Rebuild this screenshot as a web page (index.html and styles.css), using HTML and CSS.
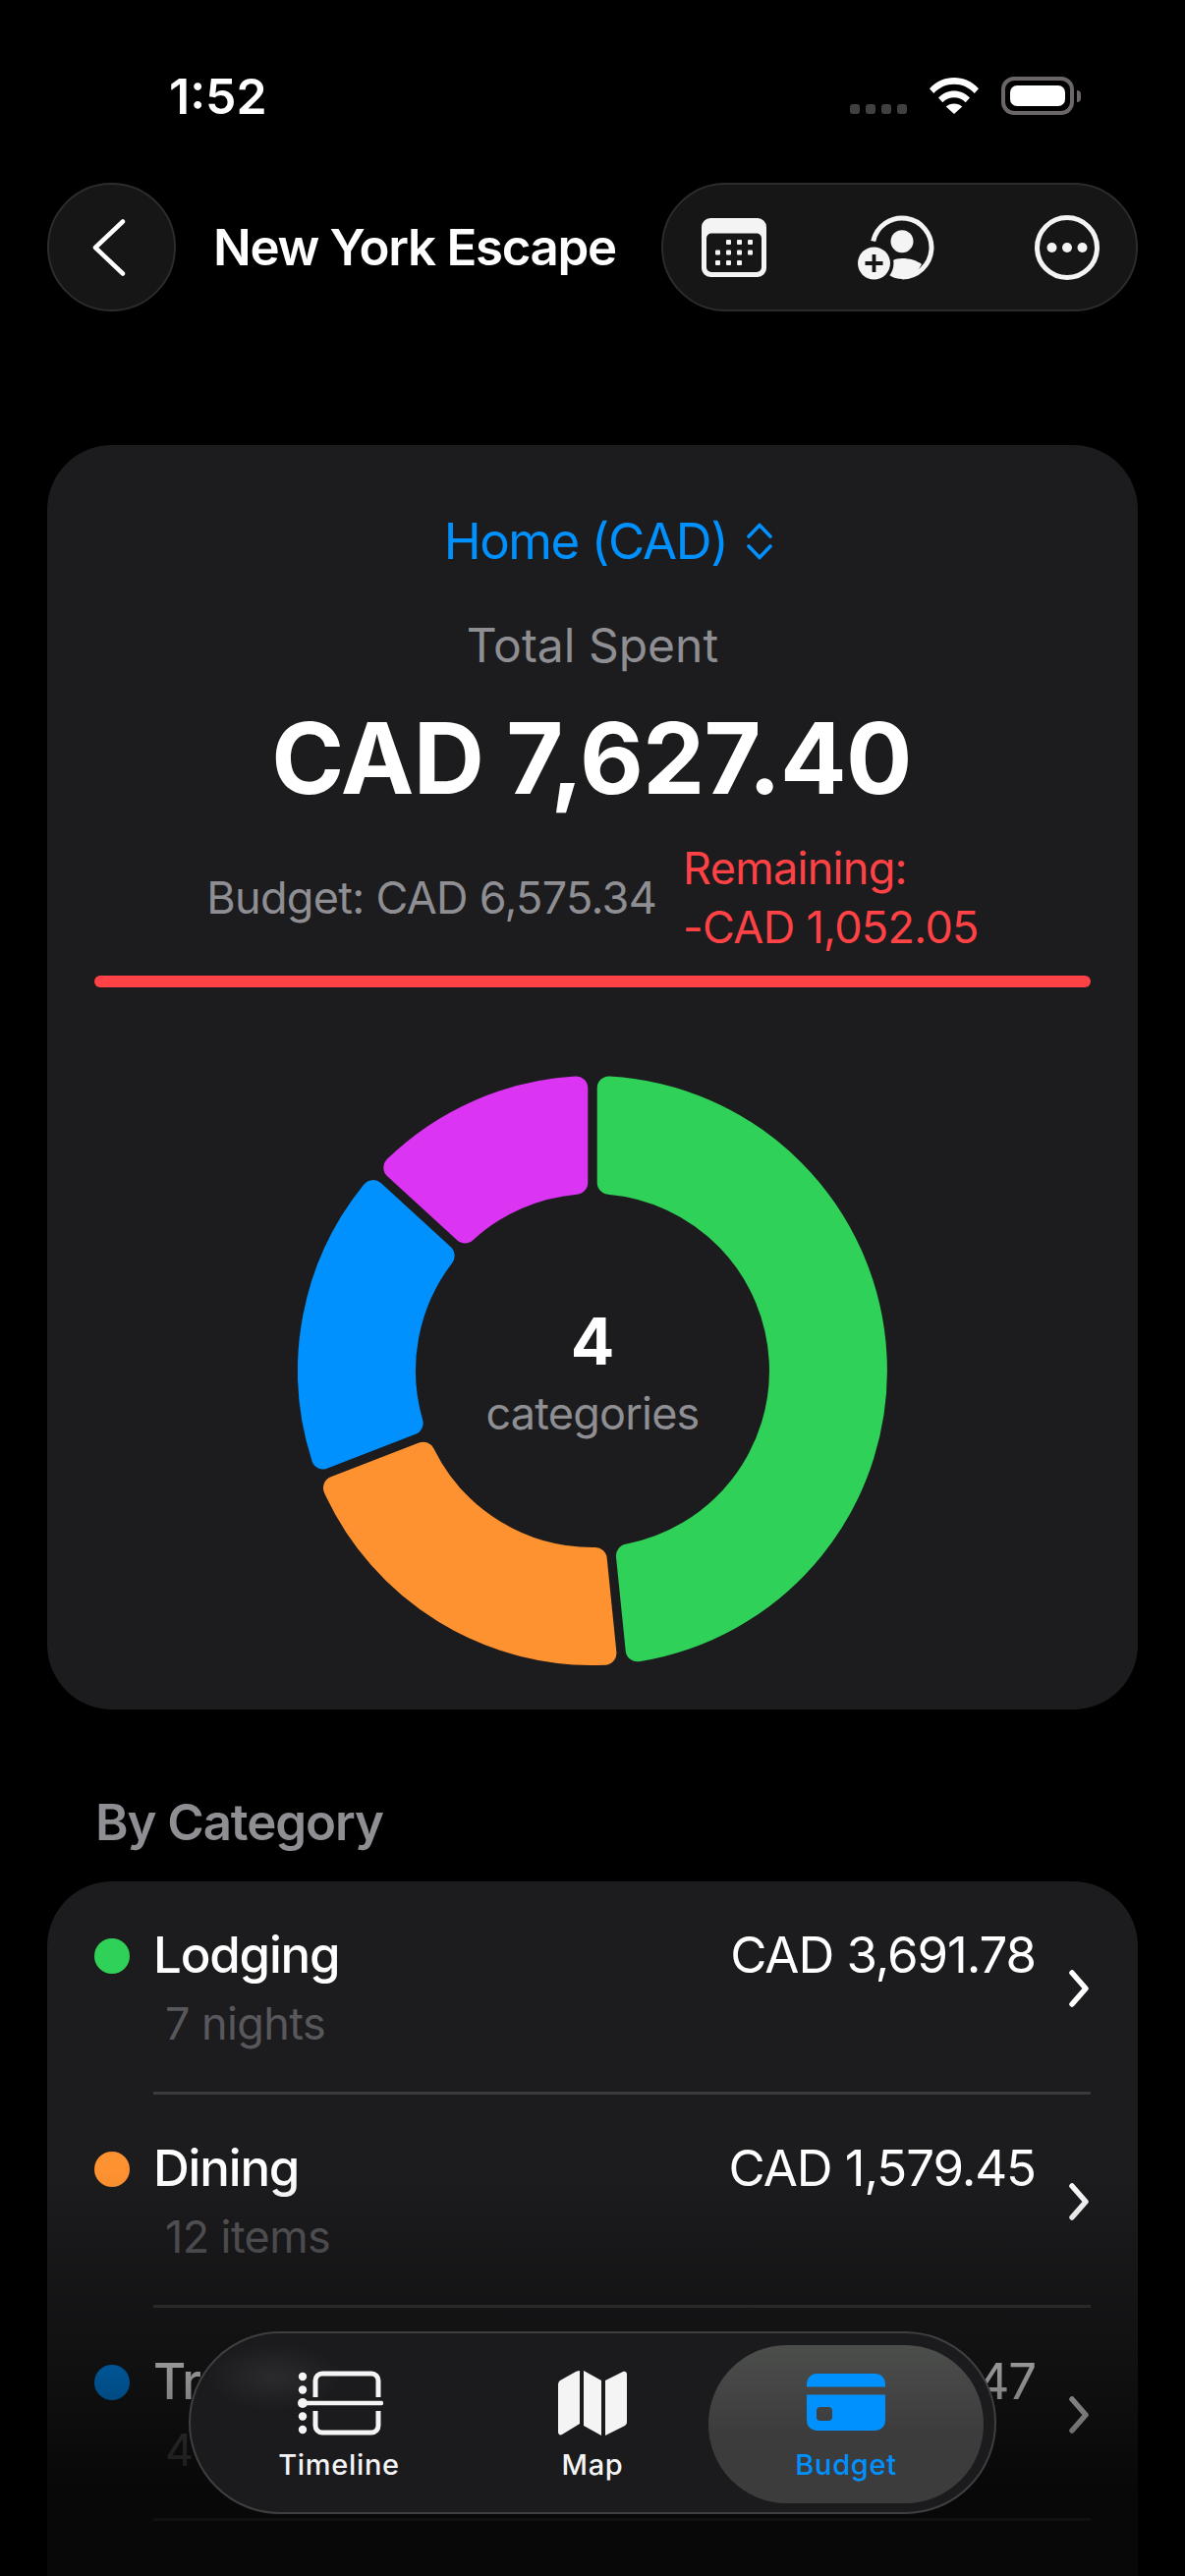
FILE: index.html
```html
<!DOCTYPE html>
<html lang="en">
<head>
  <meta charset="UTF-8">
  <meta name="viewport" content="width=device-width, initial-scale=1.0">
  <title>New York Escape - Budget</title>
  <link rel="stylesheet" href="styles.css">
</head>
<body>
  <div class="status-bar">
    <span class="status-time">1:52</span>
    <div class="status-icons">
      <div class="signal"><i></i><i></i><i></i><i></i></div>
      <svg class="wifi" width="50" height="37" viewBox="0 0 50 37">
        <path d="M25 0C15.500 0 7 3.700 0 11.200l4.300 4.800C10 10 17 6.800 25 6.800S40 10 45.700 16l4.300-4.800C43 3.700 34.500 0 25 0z" fill="#fff"/>
        <path d="M25 13.500c-6 0-11.500 2.500-16 7l4.300 4.800c3.200-3.200 7.200-5 11.700-5s8.500 1.800 11.700 5l4.300-4.800c-4.500-4.500-10-7-16-7z" fill="#fff"/>
        <path d="M25 26.500c-3.200 0-6 1.100-8.300 3.100L25 37l8.300-7.400c-2.300-2-5.100-3.100-8.300-3.100z" fill="#fff"/>
      </svg>
      <div class="battery"><div class="battery-fill"></div></div>
      <div class="battery-cap"></div>
    </div>
  </div>

  <div class="nav">
    <button class="back-btn">
      <svg width="34" height="58" viewBox="0 0 34 58"><path d="M31 2.500L3 29l28 26.500" fill="none" stroke="#fff" stroke-width="4.500" stroke-linecap="round" stroke-linejoin="round"/></svg>
    </button>
    <div class="nav-title">New York Escape</div>
    <div class="nav-actions">
      <svg width="66" height="60" viewBox="0 0 66 60">
        <path fill-rule="evenodd" fill="#f4f4f4" d="M9 0h48a9 9 0 0 1 9 9v42a9 9 0 0 1-9 9H9a9 9 0 0 1-9-9V9a9 9 0 0 1 9-9zM10 15.500a5 5 0 0 0-5 5V50a5 5 0 0 0 5 5h46a5 5 0 0 0 5-5V20.500a5 5 0 0 0-5-5z"/>
        <g fill="#f4f4f4">
          <rect x="25" y="22" width="5" height="5" rx="1"/><rect x="36" y="22" width="5" height="5" rx="1"/><rect x="47" y="22" width="5" height="5" rx="1"/>
          <rect x="14" y="32.500" width="5" height="5" rx="1"/><rect x="25" y="32.500" width="5" height="5" rx="1"/><rect x="36" y="32.500" width="5" height="5" rx="1"/><rect x="47" y="32.500" width="5" height="5" rx="1"/>
          <rect x="14" y="43" width="5" height="5" rx="1"/><rect x="25" y="43" width="5" height="5" rx="1"/><rect x="36" y="43" width="5" height="5" rx="1"/>
        </g>
      </svg>
      <svg class="person-add" width="80" height="68" viewBox="0 0 80 68">
        <path d="M15.700 27.500A30 30 0 1 1 45 64" fill="none" stroke="#f4f4f4" stroke-width="5"/>
        <circle cx="45" cy="27.700" r="11.500" fill="#f4f4f4"/>
        <path d="M26 56C31 48 38 45 45 45c8 0 15 2 20 6-5 9-12 15-20 15-8 0-15-4-19-10z" fill="#f4f4f4"/>
        <circle cx="16.500" cy="50" r="20" fill="#161616"/>
        <circle cx="16.500" cy="50" r="16.500" fill="#f4f4f4"/>
        <path d="M16.500 41v18M7.500 50h18" stroke="#161616" stroke-width="3.800"/>
      </svg>
      <svg width="66" height="66" viewBox="0 0 66 66">
        <circle cx="33" cy="33" r="30.500" fill="none" stroke="#f4f4f4" stroke-width="5"/>
        <circle cx="17.500" cy="33" r="5" fill="#f4f4f4"/><circle cx="33" cy="33" r="5" fill="#f4f4f4"/><circle cx="48.500" cy="33" r="5" fill="#f4f4f4"/>
      </svg>
    </div>
  </div>

  <div class="summary-card">
    <div class="currency-picker">
      <span>Home (CAD)</span>
      <svg width="26" height="38" viewBox="0 0 26 38"><path d="M2 14L13 2.500 24 14M2 24l11 11.500L24 24" fill="none" stroke="#0091ff" stroke-width="3.600" stroke-linecap="round" stroke-linejoin="round"/></svg>
    </div>
    <div class="total-label">Total Spent</div>
    <div class="total-value">CAD 7,627.40</div>
    <div class="budget-line">
      <div class="budget-amount">Budget: CAD 6,575.34</div>
      <div class="budget-remaining">Remaining:<br>-CAD 1,052.05</div>
    </div>
    <div class="progress"></div>
    <div class="donut">
      <svg width="600" height="600" viewBox="0 0 600 600" class="donut-chart">
        <path class="slice lodging" d="M316.700 12.500A288 288 0 0 1 345.670 584.350L335.940 488.600A192 192 0 0 0 316.700 108.730Z"/>
        <path class="slice dining" d="M312.450 587.730A288 288 0 0 1 37.980 419.540L127.710 384.740A192 192 0 0 0 302.720 491.980Z"/>
        <path class="slice transit" d="M25.900 388.400A288 288 0 0 1 76.740 118.070L147.700 183.090A192 192 0 0 0 115.630 353.600Z"/>
        <path class="slice activities" d="M99.300 93.450A288 288 0 0 1 283.300 12.500L283.300 108.730A192 192 0 0 0 170.260 158.470Z"/>
      </svg>
      <div class="donut-center">
        <div class="donut-count">4</div>
        <div class="donut-label">categories</div>
      </div>
    </div>
  </div>

  <div class="section-title">By Category</div>

  <div class="category-list">
    <div class="category-row">
      <span class="dot dot-green"></span>
      <div class="category-body">
        <span class="category-name">Lodging</span>
        <span class="category-amount">CAD 3,691.78</span>
        <svg class="chevron" width="20" height="38" viewBox="0 0 20 38"><path d="M3 3l14 16L3 35" fill="none" stroke="#fff" stroke-width="5.500" stroke-linecap="round" stroke-linejoin="round"/></svg>
        <span class="category-sub">7 nights</span>
      </div>
    </div>
    <div class="category-row">
      <span class="dot dot-orange"></span>
      <div class="category-body">
        <span class="category-name">Dining</span>
        <span class="category-amount">CAD 1,579.45</span>
        <svg class="chevron" width="20" height="38" viewBox="0 0 20 38"><path d="M3 3l14 16L3 35" fill="none" stroke="#fff" stroke-width="5.500" stroke-linecap="round" stroke-linejoin="round"/></svg>
        <span class="category-sub">12 items</span>
      </div>
    </div>
    <div class="category-row">
      <span class="dot dot-blue"></span>
      <div class="category-body">
        <span class="category-name">Transit</span>
        <span class="category-amount">CAD 1,318.47</span>
        <svg class="chevron" width="20" height="38" viewBox="0 0 20 38"><path d="M3 3l14 16L3 35" fill="none" stroke="#fff" stroke-width="5.500" stroke-linecap="round" stroke-linejoin="round"/></svg>
        <span class="category-sub">4 items</span>
      </div>
    </div>
  </div>

  <div class="bottom-fade"></div>

  <div class="tab-bar">
    <div class="tab">
      <svg width="90" height="66" viewBox="0 0 90 66">
        <g fill="#f4f4f4">
          <circle cx="8" cy="6" r="4.200"/><circle cx="8" cy="19.500" r="4.200"/><circle cx="8" cy="33" r="5"/><circle cx="8" cy="46.500" r="4.200"/><circle cx="8" cy="60" r="4.200"/>
        </g>
        <path d="M8 33h80" stroke="#f4f4f4" stroke-width="4.400" stroke-linecap="round"/>
        <path d="M21 27V10a7 7 0 0 1 7-7h50a7 7 0 0 1 7 7v17M21 41v15a7 7 0 0 0 7 7h50a7 7 0 0 0 7-7V41" fill="none" stroke="#f4f4f4" stroke-width="5"/>
      </svg>
      <span class="tab-label">Timeline</span>
    </div>
    <div class="tab">
      <svg width="70" height="66" viewBox="0 0 70 66">
        <path d="M22 0v54L4 65c-2 1-4 0-4-3V14c0-2 1-3 2-4L18 1c2-1 4-1 4-1z" fill="#f4f4f4"/>
        <path d="M26 0l18 10v56L26 56z" fill="#f4f4f4"/>
        <path d="M48 10L66 1c2-1 4 0 4 3v48c0 2-1 3-2 4L48 66z" fill="#f4f4f4"/>
      </svg>
      <span class="tab-label">Map</span>
    </div>
    <div class="tab tab-active">
      <svg width="80" height="58" viewBox="0 0 80 58">
        <path d="M0 13.500V10A10 10 0 0 1 10 0h60a10 10 0 0 1 10 10v3.500z" fill="#0091ff"/>
        <path fill-rule="evenodd" d="M0 21.500h80V48a10 10 0 0 1-10 10H10A10 10 0 0 1 0 48zM14 34a4 4 0 0 0-4 4v6a4 4 0 0 0 4 4h8a4 4 0 0 0 4-4v-6a4 4 0 0 0-4-4z" fill="#0091ff"/>
      </svg>
      <span class="tab-label">Budget</span>
    </div>
  </div>
</body>
</html>
```

FILE: styles.css
```css
* {
  box-sizing: border-box;
}

html, body {
  margin: 0;
  padding: 0;
}

body {
  position: relative;
  width: 1206px;
  height: 2622px;
  overflow: hidden;
  background: #000;
  color: #fff;
  font-family: Inter, "Noto Sans", sans-serif;
}

/* status bar */
.status-bar {
  display: flex;
  justify-content: space-between;
  height: 186px;
  padding: 68px 106px 0 172px;
}

.status-time {
  font-size: 50px;
  font-weight: 600;
  line-height: 60px;
}

.status-icons {
  display: flex;
  align-items: flex-start;
  padding-top: 10px;
}

.signal {
  display: flex;
  gap: 6px;
  margin-top: 28px;
  margin-right: 23px;
}

.signal i {
  width: 10px;
  height: 10px;
  border-radius: 3px;
  background: #404040;
}

.wifi {
  margin-top: 1px;
  margin-right: 23px;
}

.battery {
  width: 74px;
  height: 39px;
  padding: 5px;
  border: 4px solid #6b6669;
  border-radius: 13px;
}

.battery-fill {
  height: 100%;
  background: #fff;
  border-radius: 7px;
}

.battery-cap {
  width: 4px;
  height: 12px;
  margin: 14px 0 0 3px;
  background: #6b6669;
  border-radius: 0 4px 4px 0;
}

/* nav */
.nav {
  display: flex;
  align-items: center;
  height: 131px;
  padding: 0 48px;
}

.back-btn {
  display: flex;
  align-items: center;
  justify-content: center;
  width: 131px;
  height: 131px;
  padding: 0 6px 0 0;
  background: #161616;
  border: 2px solid #2c2c2e;
  border-radius: 50%;
}

.nav-title {
  flex: 1;
  margin-left: 38px;
  font-size: 51px;
  font-weight: 600;
  line-height: 60px;
  letter-spacing: -1.3px;
}

.nav-actions {
  display: flex;
  align-items: center;
  justify-content: space-between;
  width: 485px;
  height: 131px;
  padding: 0 37px 0 39px;
  background: #161616;
  border: 2px solid #2c2c2e;
  border-radius: 66px;
}

.person-add {
  margin-right: 7px;
}

/* summary */
.summary-card {
  height: 1287px;
  margin: 136px 48px 0;
  padding: 68px 48px 0;
  background: #1c1c1e;
  border-radius: 66px;
  text-align: center;
}

.currency-picker {
  display: flex;
  align-items: center;
  justify-content: center;
  gap: 20px;
  padding-left: 32px;
  color: #0091ff;
  font-size: 51px;
  line-height: 60px;
  letter-spacing: -1.4px;
}

.total-label {
  margin-top: 46px;
  color: #8e8e93;
  font-size: 48px;
  line-height: 60px;
}

.total-value {
  margin: 25px 2px 0 0;
  font-size: 100px;
  font-weight: 700;
  line-height: 120px;
  letter-spacing: -0.7px;
}

.budget-line {
  display: flex;
  align-items: center;
  justify-content: center;
  gap: 27px;
  margin-top: 22px;
  font-size: 45px;
  line-height: 60px;
  letter-spacing: -0.7px;
  text-align: left;
}

.budget-amount {
  color: #8e8e93;
}

.budget-remaining {
  color: #ff4245;
}

.progress {
  height: 12px;
  margin-top: 19px;
  background: #ff4245;
  border-radius: 6px;
}

.donut {
  position: relative;
  width: 600px;
  height: 600px;
  margin: 90px auto 0;
}

.donut-chart {
  display: block;
}

.slice {
  stroke-width: 24;
  stroke-linejoin: round;
}

.lodging { fill: #30d158; stroke: #30d158; }
.dining { fill: #ff9230; stroke: #ff9230; }
.transit { fill: #0091ff; stroke: #0091ff; }
.activities { fill: #db34f2; stroke: #db34f2; }

.donut-center {
  position: absolute;
  top: 230px;
  left: 0;
  right: 0;
  text-align: center;
}

.donut-count {
  font-size: 66px;
  font-weight: 700;
  line-height: 80px;
}

.donut-label {
  margin-top: 6px;
  color: #8e8e93;
  font-size: 45px;
  line-height: 56px;
  letter-spacing: -0.8px;
}

/* category list */
.section-title {
  margin: 85px 48px 30px 97px;
  color: #8e8e93;
  font-size: 51px;
  font-weight: 600;
  line-height: 60px;
  letter-spacing: -1.1px;
}

.category-list {
  height: 707px;
  margin: 0 48px;
  padding-left: 48px;
  background: #1c1c1e;
  border-radius: 66px 66px 0 0;
}

.category-row {
  display: flex;
  height: 217px;
}

.dot {
  flex: none;
  width: 36px;
  height: 36px;
  margin-top: 58px;
  margin-right: 24px;
  border-radius: 50%;
}

.dot-green { background: #30d158; }
.dot-orange { background: #ff9230; }
.dot-blue { background: #0091ff; }

.category-body {
  flex: 1;
  display: grid;
  grid-template-columns: 1fr auto 56px;
  align-content: start;
  margin-right: 48px;
  padding-top: 45px;
  border-bottom: 3px solid #3a3a3c;
}

.category-name {
  font-size: 51px;
  font-weight: 500;
  line-height: 60px;
  letter-spacing: -1.2px;
}

.category-amount {
  font-size: 51px;
  line-height: 60px;
  letter-spacing: -1.1px;
}

.chevron {
  grid-row: 1 / 3;
  grid-column: 3;
  align-self: center;
  justify-self: end;
  margin-right: 2px;
}

.category-sub {
  grid-column: 1;
  margin-top: 13px;
  padding-left: 12px;
  color: #58585c;
  font-size: 45px;
  line-height: 54px;
  letter-spacing: -0.6px;
}

/* fade under the tab bar */
.bottom-fade {
  position: absolute;
  left: 0;
  right: 0;
  top: 2210px;
  height: 412px;
  background: linear-gradient(to bottom, rgba(0, 0, 0, 0), rgba(0, 0, 0, 0.45) 52%, rgba(0, 0, 0, 0.72) 80%, rgba(0, 0, 0, 0.72));
}

/* tab bar */
.tab-bar {
  position: absolute;
  top: 2373px;
  left: 192px;
  display: flex;
  width: 822px;
  height: 186px;
  padding: 12px 11px 0 22px;
  background:
    radial-gradient(ellipse 70px 34px at 85px 44px, rgba(255, 255, 255, 0.07), transparent),
    #1b1b1d;
  border: 2px solid #3f3f41;
  border-radius: 93px;
}

.tab {
  display: flex;
  flex-direction: column;
  align-items: center;
  width: 258px;
  height: 161px;
  padding-top: 26px;
}

.tab-label {
  margin-top: 12px;
  color: #f4f4f4;
  font-size: 29px;
  font-weight: 500;
  line-height: 36px;
  letter-spacing: 0.7px;
}

.tab-active {
  width: 280px;
  margin: 0 -11px;
  padding-top: 29px;
  background: linear-gradient(to bottom, #4c4e4c, #3c3c3c 55%);
  border-radius: 80px;
}

.tab-active .tab-label {
  margin-top: 17px;
  color: #0091ff;
}
```
